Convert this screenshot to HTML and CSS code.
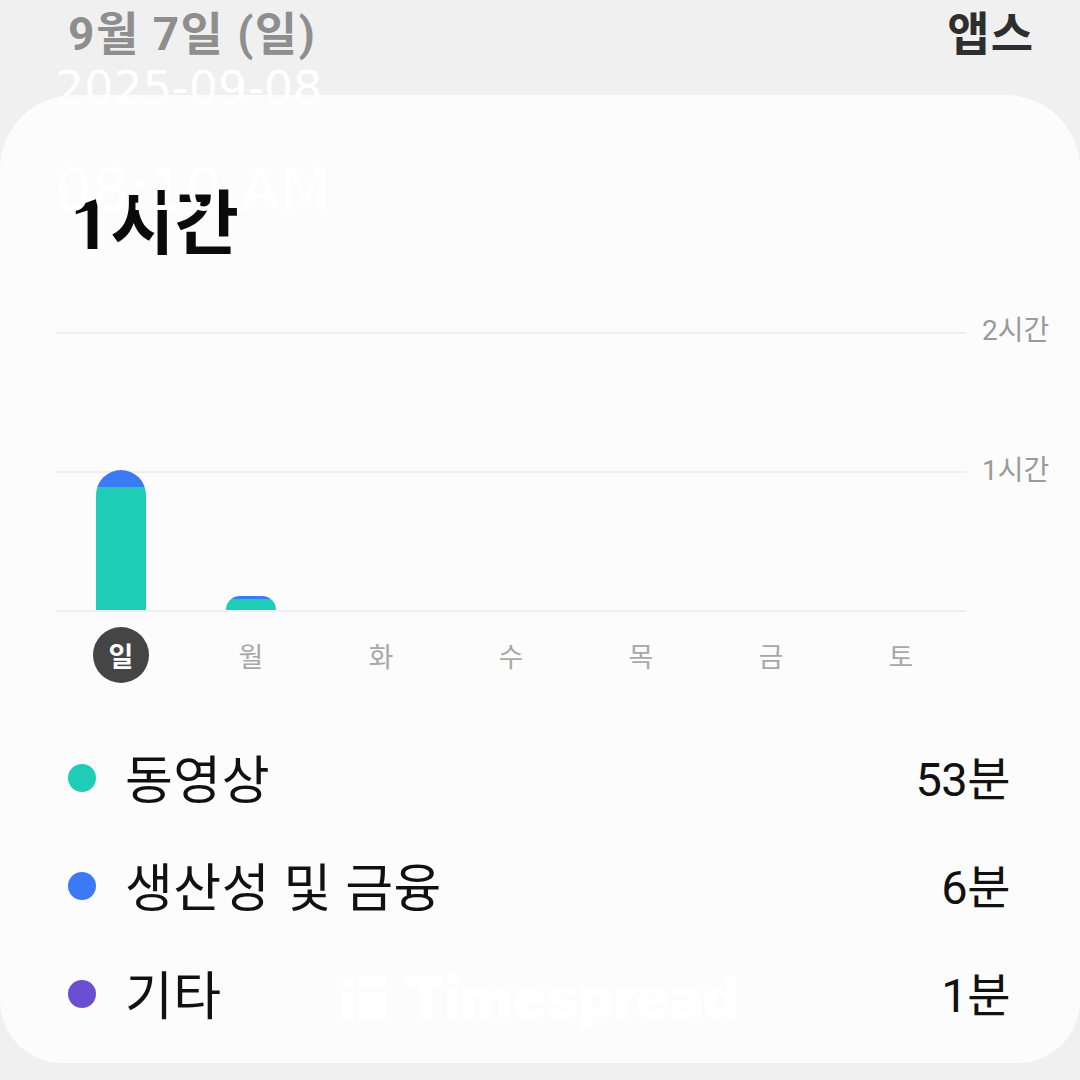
FILE: index.html
```html
<!DOCTYPE html>
<html lang="ko">
<head>
<meta charset="utf-8">
<link rel="stylesheet" href="styles.css">
</head>
<body>
<div class="page">
  <header class="top">
    <div class="date">9월 7일 (일)</div>
    <div class="apps">앱스</div>
  </header>

  <section class="card">
    <h1 class="total">1시간</h1>

    <div class="chart">
      <div class="plot">
        <div class="col"><div class="bar" style="height:140px"><div class="seg blue" style="height:17px"></div><div class="seg teal"></div></div></div>
        <div class="col"><div class="bar" style="height:14px"><div class="seg blue" style="height:3px"></div><div class="seg teal"></div></div></div>
        <div class="col"></div>
        <div class="col"></div>
        <div class="col"></div>
        <div class="col"></div>
        <div class="col"></div>
      </div>
      <div class="axis">
        <span>2시간</span>
        <span>1시간</span>
      </div>
    </div>

    <div class="days">
      <span class="day active">일</span>
      <span class="day">월</span>
      <span class="day">화</span>
      <span class="day">수</span>
      <span class="day">목</span>
      <span class="day">금</span>
      <span class="day">토</span>
    </div>

    <ul class="legend">
      <li class="row"><span class="dot teal"></span><span class="name">동영상</span><span class="val">53분</span></li>
      <li class="row"><span class="dot blue"></span><span class="name">생산성 및 금융</span><span class="val">6분</span></li>
      <li class="row"><span class="dot purple"></span><span class="name">기타</span><span class="val">1분</span></li>
    </ul>

    <div class="watermark">
      <svg class="wm-icon" width="44" height="43" viewBox="0 0 44 43">
        <circle cx="6" cy="6" r="6" fill="#fff"/>
        <rect x="0" y="15" width="12" height="28" fill="#fff"/>
        <rect x="16" y="0" width="28" height="12" fill="#fff"/>
        <rect x="16" y="15" width="28" height="28" fill="#fff"/>
      </svg>
      <span class="wm-text">Timespread</span>
    </div>
  </section>

  <div class="stamp date-stamp">2025-09-08</div>
  <div class="stamp time-stamp">08:10 AM</div>
</div>
</body>
</html>
```

FILE: styles.css
```css
* { box-sizing: border-box; }
html, body { margin: 0; padding: 0; }
body {
  background: #f0f0f0;
  font-family: Roboto, "Noto Sans CJK KR", sans-serif;
  width: 1080px;
  height: 1080px;
  overflow: hidden;
}
.page { position: relative; width: 1080px; height: 1080px; }

.top {
  height: 95px;
  display: flex;
  justify-content: space-between;
  align-items: flex-start;
  padding: 4px 46px 0 68px;
}
.date {
  font-size: 46px;
  line-height: 60px;
  font-weight: 700;
  color: #8e8e8e;
  letter-spacing: 1.5px;
}
.apps {
  font-size: 46px;
  line-height: 60px;
  font-weight: 700;
  color: #2e2e2e;
  letter-spacing: 1px;
}

.card {
  position: relative;
  height: 968px;
  background: #fcfcfc;
  border-radius: 74px 74px 62px 62px;
  padding-top: 90px;
}
.total {
  margin: 0 0 0 70px;
  font-size: 70px;
  line-height: 80px;
  font-weight: 700;
  color: #0a0a0a;
  letter-spacing: 0;
}

.chart {
  display: flex;
  margin: 67px 0 0 56px;
}
.plot {
  width: 910px;
  height: 280px;
  border-top: 2px solid #efefef;
  border-bottom: 2px solid #efefef;
  background: linear-gradient(#efefef, #efefef) 0 137px / 100% 2px no-repeat;
  display: grid;
  grid-template-columns: repeat(7, 1fr);
  align-items: end;
}
.col {
  display: flex;
  justify-content: center;
  align-items: flex-end;
  height: 100%;
}
.bar {
  width: 50px;
  display: flex;
  flex-direction: column;
  border-radius: 25px 25px 0 0;
  overflow: hidden;
}
.seg.blue { background: #3b79f6; flex: none; }
.seg.teal { background: #1fcdb7; flex: 1; }

.axis {
  display: flex;
  flex-direction: column;
  gap: 108px;
  margin-top: -17px;
  padding-left: 16px;
}
.axis span {
  font-size: 28px;
  line-height: 32px;
  color: #9a9a9a;
}

.days {
  display: grid;
  grid-template-columns: repeat(7, 130px);
  margin: 15px 0 0 56px;
  width: 910px;
}
.day {
  justify-self: center;
  width: 56px;
  height: 56px;
  border-radius: 50%;
  display: flex;
  align-items: center;
  justify-content: center;
  font-size: 27px;
  color: #a8a8a8;
}
.day.active {
  background: #454545;
  color: #ffffff;
  font-weight: 700;
}

.legend {
  list-style: none;
  margin: 41px 0 0;
  padding: 0 70px 0 68px;
}
.row {
  height: 108px;
  display: flex;
  align-items: center;
}
.dot {
  width: 28px;
  height: 28px;
  border-radius: 50%;
  flex: none;
}
.dot.teal { background: #1fcdb7; }
.dot.blue { background: #3b79f6; }
.dot.purple { background: #6a4fd2; }
.name {
  margin-left: 29px;
  padding-top: 8px;
  font-size: 52px;
  line-height: 60px;
  color: #111;
  flex: 1;
  letter-spacing: 0.5px;
}
.val {
  padding-top: 4px;
  font-size: 47px;
  line-height: 56px;
  font-weight: 400;
  color: #111;
  letter-spacing: -0.5px;
}

.watermark {
  position: absolute;
  left: 342px;
  top: 878px;
  display: flex;
  align-items: center;
  gap: 20px;
}
.wm-text {
  font-family: Inter, Roboto, sans-serif;
  font-weight: 900;
  font-size: 56px;
  line-height: 50px;
  color: #ffffff;
  letter-spacing: -0.5px;
}

.stamp {
  position: absolute;
  left: 55px;
  font-family: "DejaVu Sans", sans-serif;
  font-weight: 400;
  color: #ffffff;
  line-height: 1;
  white-space: nowrap;
}
.date-stamp { top: 65px; font-size: 46px; }
.time-stamp { top: 161px; font-size: 58px; }
```
